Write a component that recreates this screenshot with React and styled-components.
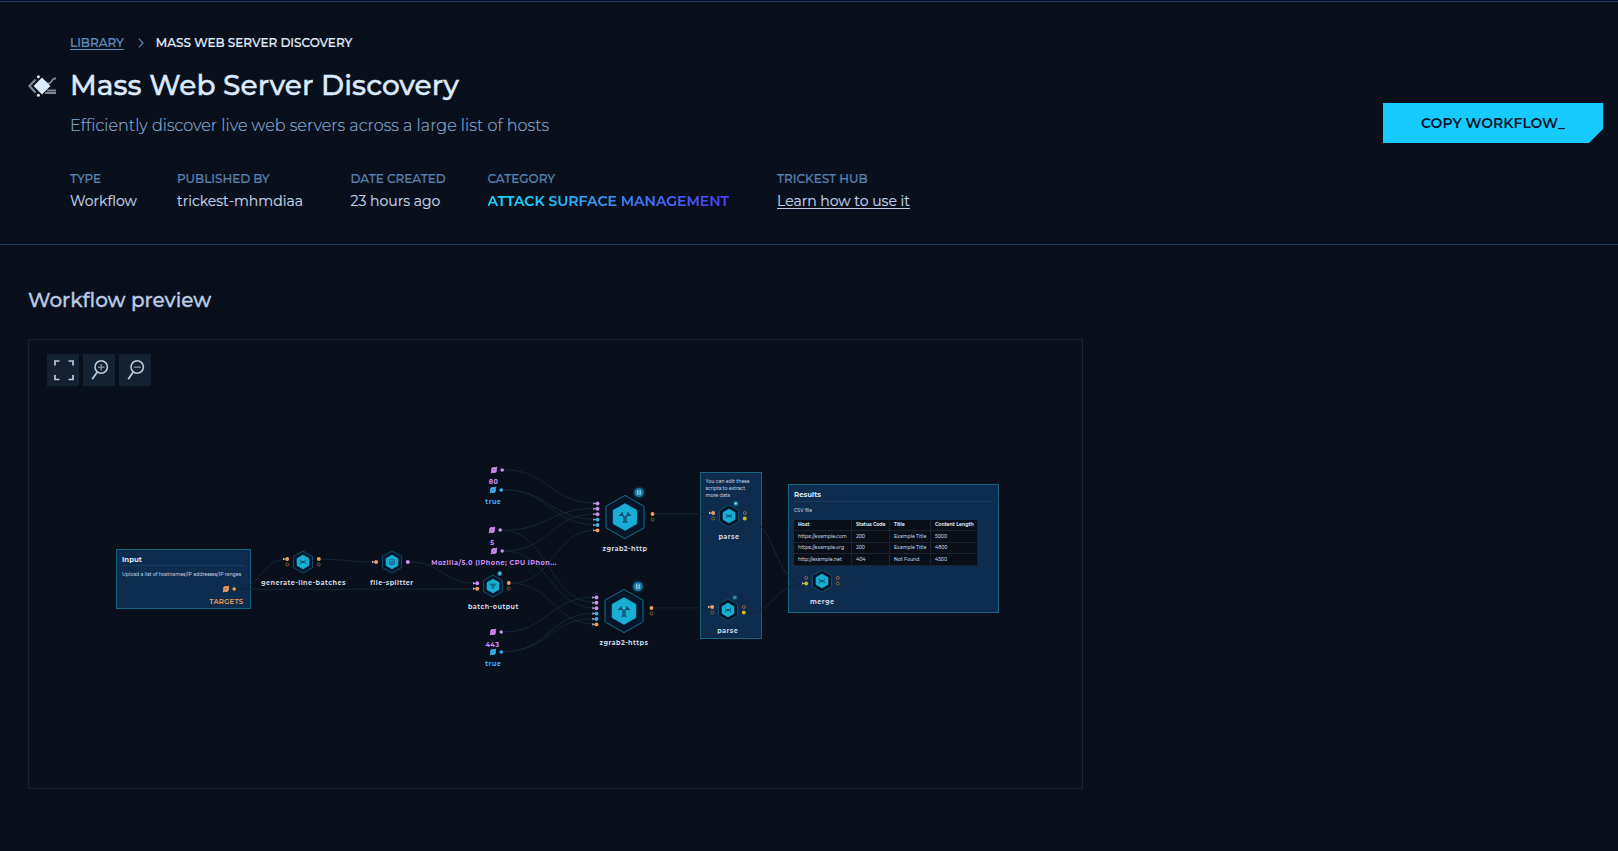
import React from "react";
import styled, { createGlobalStyle } from "styled-components";

const colors = {
  orange: "#f29d5c",
  purple: "#cf8df5",
  blue: "#3fb2f2",
  yellow: "#cdbd1c",
  ring: "#8a7128",
  ringOrange: "#a8744a",
};

const details = [
  { label: "Type", value: "Workflow" },
  { label: "Published by", value: "trickest-mhmdiaa" },
  { label: "Date created", value: "23 hours ago" },
];

// value nodes: glyph position on the board
const values = [
  { x: 464.7, y: 129.7, text: "80", color: "purple" },
  { x: 464.4, y: 149.7, text: "true", color: "blue" },
  { x: 463.4, y: 190.4, text: "5", color: "purple" },
  { x: 465, y: 211, text: "Mozilla/5.0 (iPhone; CPU iPhon...", color: "purple" },
  { x: 463.5, y: 292.3, text: "443", color: "purple" },
  { x: 464.3, y: 311.7, text: "true", color: "blue" },
  { x: 197.3, y: 249.3, text: "TARGETS", color: "orange", light: true },
];

const scriptInputs = [
  { y: -3, color: "orange" },
  { y: 2.5, color: "ring", ring: true },
];

const scanInputs = [
  { y: -13.5, color: "purple" },
  { y: -8.2, color: "purple" },
  { y: -2.8, color: "purple" },
  { y: 2.6, color: "blue" },
  { y: 8, color: "blue" },
  { y: 13.4, color: "orange" },
];

const parseOutputs = [
  { y: -3, color: "ringOrange", ring: true },
  { y: 2.5, color: "yellow" },
];

const nodes = [
  {
    x: 274.4,
    y: 222.3,
    name: "generate-line-batches",
    glyph: "script",
    inputs: scriptInputs,
    outputs: scriptInputs,
  },
  {
    x: 363,
    y: 222,
    name: "file-splitter",
    glyph: "split",
    inputs: [{ y: 0, color: "orange" }],
    outputs: [{ y: 0, color: "purple" }],
  },
  {
    x: 464.4,
    y: 246,
    name: "batch-output",
    glyph: "batch",
    badge: true,
    inputs: [
      { y: -2.7, color: "purple" },
      { y: 2.7, color: "orange" },
    ],
    outputs: scriptInputs,
  },
  {
    x: 596,
    y: 176.5,
    name: "zgrab2-http",
    glyph: "tool",
    large: true,
    inputs: scanInputs,
    outputs: scriptInputs,
  },
  {
    x: 595,
    y: 270.5,
    name: "zgrab2-https",
    glyph: "tool",
    large: true,
    inputs: scanInputs,
    outputs: scriptInputs,
  },
  {
    x: 700,
    y: 176.4,
    name: "parse",
    glyph: "script",
    badge: true,
    panel: true,
    inputs: scriptInputs,
    outputs: parseOutputs,
  },
  {
    x: 698.7,
    y: 270.4,
    name: "parse",
    glyph: "script",
    badge: true,
    panel: true,
    dim: true,
    inputs: scriptInputs,
    outputs: parseOutputs,
  },
  {
    x: 793.3,
    y: 241.3,
    name: "merge",
    glyph: "script",
    panel: true,
    inputs: [
      { y: -3, color: "ringOrange", ring: true },
      { y: 2.5, color: "yellow" },
    ],
    outputs: [
      { y: -3, color: "ringOrange", ring: true },
      { y: 2.5, color: "ring", ring: true },
    ],
  },
];

// [x1, y1, x2, y2]
const wires = [
  [207, 249.3, 257, 219.3],
  [207, 249.3, 447, 249],
  [292, 219.3, 345, 222],
  [380, 222, 447, 243.3],
  [474, 129.7, 567, 163.2],
  [474, 149.7, 567, 179.3],
  [474, 149.7, 567, 184.7],
  [473, 190.3, 567, 168.5],
  [473, 190.3, 566, 262.5],
  [475, 211, 567, 173.9],
  [475, 211, 566, 267.9],
  [482, 243.3, 567, 190.1],
  [482, 243.3, 566, 284.1],
  [473, 292, 566, 257.2],
  [474, 311.7, 566, 273.3],
  [474, 311.7, 566, 278.7],
  [626, 173.9, 682, 173.9],
  [625, 267.8, 681, 267.8],
  [717, 179.3, 775, 244],
  [716, 273.2, 775, 244],
];

const rows = [
  ["https://example.com", "200", "Example Title", "5000"],
  ["https://example.org", "200", "Example Title", "4800"],
  ["http://example.net", "404", "Not Found", "4500"],
];

const hexagon = (w, h) =>
  `0,${-h} ${w},${-h / 2} ${w},${h / 2} 0,${h} ${-w},${h / 2} ${-w},${-h / 2}`;

const WorkflowLogo = () => (
  <svg width="28" height="22" viewBox="0 0 28 22">
    <path d="M7.500 4.500L1.500 11l6 6.500" fill="none" stroke="#7d8797" strokeWidth="2.2" />
    <path
      d="M17 8.500h4c2.500 0 2.500-5 6-5h1M19 15.500h9M17 18h11"
      fill="none"
      stroke="#7d8797"
      strokeWidth="1.8"
    />
    <path d="M14 2.600l8.400 8.400-8.400 8.400L5.600 11z" fill="#dbeafe" />
    <circle cx="10.400" cy="1.800" r="1.500" fill="#dbeafe" />
    <circle cx="10.400" cy="20.200" r="1.500" fill="#dbeafe" />
  </svg>
);

const ZoomIcon = ({ plus }) => (
  <svg width="32" height="32" viewBox="0 0 32 32" fill="none">
    <circle cx="18.200" cy="13" r="6.200" stroke="#b9cbe3" strokeWidth="1.6" />
    <path d="M14.200 18l-5 7.200" stroke="#b9cbe3" strokeWidth="1.7" />
    <path
      d={plus ? "M15 13.200h6.500M18.200 10v6.500" : "M14.800 13.200h7"}
      stroke="#74869b"
      strokeWidth="1.5"
    />
  </svg>
);

const Glyph = ({ type }) => {
  if (type === "tool") {
    return (
      <path
        d="M-2.400 5.300h1.500V-.4L-4.400-3.200M2.400 5.300H.9V-.4l3.500-2.800M-5.900-1.500l2.700-.6M5.900-1.500l-2.700-.6M-2.800-4.800v2.600M2.800-4.800v2.600"
        stroke="#0b3450"
        strokeWidth="1.1"
      />
    );
  }
  if (type === "split") {
    return (
      <g stroke="#0b5a7c" strokeWidth="0.8">
        <circle r="2.900" />
        <path d="M-1.300 1.300v-2h2.600v2z" />
      </g>
    );
  }
  if (type === "batch") {
    return (
      <path
        d="M-3.200-1.800h6.400M-2.600-.3L-1-1.500M2.600-.3L1-1.500M-.7-1.500V2.600M.7-1.500V2.600"
        stroke="#0b4a68"
        strokeWidth="0.8"
      />
    );
  }
  return (
    <path
      d="M-3.200-2.200L-1.400 0l-1.800 2.200M3.200-2.200L1.400 0l1.800 2.200M-1.400-.5h2.800M-1.400.7h2.800"
      stroke="#0b4a68"
      strokeWidth="0.9"
    />
  );
};

const Port = ({ x, port, input }) => (
  <g transform={`translate(${x} ${port.y})`}>
    {port.ring ? (
      <circle r="1.500" stroke={colors[port.color]} strokeWidth="0.8" />
    ) : (
      <>
        {input && (
          <path d="M-3.700-1.100v2.200M-3.300 0h2" stroke="#c3cede" strokeWidth="0.9" />
        )}
        <circle r="1.950" fill={colors[port.color]} />
      </>
    )}
  </g>
);

const NodeDrawing = ({ node }) => {
  const portX = node.large ? 27.5 : 15.8;
  return (
    <NodeSvg width="72" height="72" viewBox="-36 -36 72 72" fill="none">
      <polygon
        points={node.large ? hexagon(19, 21.6) : hexagon(9.6, 11)}
        fill={node.panel ? "#071426" : "#07152b"}
        stroke={node.large ? "#13708c" : "#124e6e"}
        strokeWidth="1"
      />
      <polygon
        points={node.large ? hexagon(11.9, 13.4) : hexagon(6, 7)}
        fill="#19aed4"
        stroke="#19aed4"
        strokeWidth="0.6"
        strokeLinejoin="round"
      />
      <Glyph type={node.glyph} />
      {node.large && (
        <g transform="translate(14 -24.500)">
          <circle r="6.300" fill="#0c3a55" opacity="0.6" />
          <circle r="4.600" fill="#1580aa" />
          <path d="M-1.200-2v4M1.200-2v4" stroke="#c8e6f2" strokeWidth="1.3" strokeDasharray="1.800 0.400" />
        </g>
      )}
      {node.badge && (
        <g transform="translate(6.800 -12.400)" opacity={node.dim ? 0.65 : 1}>
          <circle r="2.500" fill="#17789c" />
          <circle r="1" fill="#b5e4f5" />
        </g>
      )}
      {node.inputs.map((port, index) => (
        <Port key={index} x={-portX} port={port} input />
      ))}
      {node.outputs.map((port, index) => (
        <Port key={index} x={portX} port={port} />
      ))}
    </NodeSvg>
  );
};

const ValueDrawing = ({ color }) => (
  <NodeSvg width="24" height="12" viewBox="-12 -6 24 12" fill="none">
    <circle r="2.900" fill={color} />
    <path d="M-2.900 2.900l1-1M1.900-1.900l1-1" stroke={color} strokeWidth="1.5" />
    <path d="M-1.200.4l1-.8 1.200.6" stroke="#1d2a4a" strokeWidth="0.5" />
    <circle cx="8.200" r="1.800" fill={color} />
  </NodeSvg>
);

const App = () => {
  return (
    <Wrapper>
      <GlobalStyle />
      <Header>
        <HeaderInfo>
          <Breadcrumbs>
            <a>Library</a>
            <svg width="6" height="10" viewBox="0 0 6 10" fill="none">
              <path d="M.7.700L5 5 .7 9.300" stroke="#5b86b5" strokeWidth="1.1" />
            </svg>
            <span>Mass Web Server Discovery</span>
          </Breadcrumbs>
          <Logo>
            <WorkflowLogo />
          </Logo>
          <Title>Mass Web Server Discovery</Title>
          <Subtitle>
            Efficiently discover live web servers across a large list of hosts
          </Subtitle>
          <Details>
            {details.map(({ label, value }) => (
              <div key={label}>
                <DetailLabel>{label}</DetailLabel>
                <DetailValue>{value}</DetailValue>
              </div>
            ))}
            <div>
              <DetailLabel>Category</DetailLabel>
              <CategoryValue>Attack Surface Management</CategoryValue>
            </div>
            <div>
              <DetailLabel>Trickest Hub</DetailLabel>
              <DetailLink as="a">Learn how to use it</DetailLink>
            </div>
          </Details>
        </HeaderInfo>
        <CopyButton type="button">Copy workflow_</CopyButton>
      </Header>
      <Preview>
        <h2>Workflow preview</h2>
        <Board>
          <Toolbar>
            <button type="button">
              <svg width="32" height="32" viewBox="0 0 32 32" fill="none">
                <path
                  d="M8 11.500V7h4.500M21.500 7H26v4.500M26 21v4.500h-4.500M12.500 25.500H8V21"
                  stroke="#b9cbe3"
                  strokeWidth="1.7"
                />
              </svg>
            </button>
            <button type="button">
              <ZoomIcon plus />
            </button>
            <button type="button">
              <ZoomIcon />
            </button>
          </Toolbar>
          <InputPanel>
            <h3>Input</h3>
            <p>Upload a list of hostnames/IP addresses/IP ranges</p>
          </InputPanel>
          <ScriptsPanel>
            You can edit these
            <br />
            scripts to extract
            <br />
            more data
          </ScriptsPanel>
          <ResultsPanel>
            <h3>Results</h3>
            <p>CSV file</p>
            <ResultsTable>
              <thead>
                <tr>
                  <th>Host</th>
                  <th>Status Code</th>
                  <th>Title</th>
                  <th>Content Length</th>
                </tr>
              </thead>
              <tbody>
                {rows.map((row) => (
                  <tr key={row[0]}>
                    {row.map((cell) => (
                      <td key={cell}>{cell}</td>
                    ))}
                  </tr>
                ))}
              </tbody>
            </ResultsTable>
          </ResultsPanel>
          <Wires width="1053" height="448" viewBox="0 0 1053 448">
            {wires.map(([x1, y1, x2, y2], index) => {
              const mid = (x1 + x2) / 2;
              return (
                <path
                  key={index}
                  d={`M${x1} ${y1}C${mid} ${y1} ${mid} ${y2} ${x2} ${y2}`}
                />
              );
            })}
          </Wires>
          {values.map((item, index) => (
            <BoardItem key={index} $x={item.x} $y={item.y}>
              <ValueDrawing color={colors[item.color]} />
              <ValueLabel $color={colors[item.color]} $light={item.light}>
                {item.text}
              </ValueLabel>
            </BoardItem>
          ))}
          {nodes.map((node, index) => (
            <BoardItem key={index} $x={node.x} $y={node.y}>
              <NodeDrawing node={node} />
              <NodeLabel $large={node.large}>{node.name}</NodeLabel>
            </BoardItem>
          ))}
        </Board>
      </Preview>
    </Wrapper>
  );
};

const GlobalStyle = createGlobalStyle`
  * {
    box-sizing: border-box;
  }
  body {
    margin: 0;
    background: #09101c;
    font-family: Montserrat, Inter, sans-serif;
    overflow: hidden;
  }
  h1, h2, h3, p {
    margin: 0;
  }
`;

const Wrapper = styled.main`
  min-height: 851px;
  padding-top: 1px;
  background: #09101c;
`;

const Header = styled.header`
  display: flex;
  align-items: center;
  justify-content: space-between;
  height: 244px;
  padding: 0 15px 0 28px;
  border-top: 1px solid #1d3a68;
  border-bottom: 1px solid #1d3a68;
`;

const HeaderInfo = styled.div`
  display: grid;
  grid-template-columns: 42px 1fr;
  align-self: flex-start;
  padding-top: 33px;
  -webkit-text-stroke: 0.2px;
`;

const Breadcrumbs = styled.nav`
  grid-column: 2;
  display: flex;
  align-items: center;
  font-size: 12px;
  font-weight: 500;
  line-height: 16px;
  text-transform: uppercase;
  color: #e2ecfa;
  a {
    color: #5f8bbd;
    text-decoration: underline;
    text-underline-offset: 2px;
  }
  svg {
    margin: 0 12px 0 14px;
  }
`;

const Logo = styled.div`
  display: flex;
  align-items: center;
  margin-top: 18px;
`;

const Title = styled.h1`
  margin-top: 17px;
  font-size: 28px;
  font-weight: 500;
  line-height: 34px;
  letter-spacing: 0.001em;
  color: #dbeafe;
  -webkit-text-stroke: 0.4px;
`;

const Subtitle = styled.p`
  grid-column: 2;
  margin-top: 14px;
  font-size: 16px;
  font-weight: 300;
  line-height: 20px;
  letter-spacing: 0.0012em;
  color: #84a5cc;
`;

const Details = styled.div`
  grid-column: 2;
  display: grid;
  grid-template-columns: 107px 173.5px 137px 289.5px auto;
  margin-top: 35px;
`;

const DetailLabel = styled.div`
  font-size: 12px;
  font-weight: 500;
  line-height: 16px;
  text-transform: uppercase;
  color: #5980ae;
`;

const DetailValue = styled.div`
  margin-top: 5px;
  font-size: 14px;
  line-height: 18px;
  color: #c0cfe4;
`;

const CategoryValue = styled(DetailValue)`
  width: fit-content;
  font-weight: 600;
  text-transform: uppercase;
  color: transparent;
  background: linear-gradient(90deg, #19d3fb 15%, #3f7bff 60%, #4a3cf5 100%);
  background-clip: text;
`;

const DetailLink = styled(DetailValue)`
  display: block;
  width: fit-content;
  text-decoration: underline;
  text-underline-offset: 2px;
`;

const CopyButton = styled.button`
  width: 220px;
  height: 40px;
  padding: 0;
  border: none;
  background: #18cbff;
  clip-path: polygon(0 0, 100% 0, 100% 26px, 206px 100%, 0 100%);
  font-family: inherit;
  font-size: 14px;
  font-weight: 600;
  text-transform: uppercase;
  color: #07152b;
  cursor: pointer;
`;

const Preview = styled.section`
  padding: 43px 28px 0;
  h2 {
    font-size: 20px;
    font-weight: 500;
    line-height: 24px;
    color: #b9cbe3;
    -webkit-text-stroke: 0.3px;
  }
`;

const Board = styled.div`
  position: relative;
  width: 1055px;
  height: 450px;
  margin-top: 27px;
  padding: 14px 18px;
  border: 1px solid #1a2431;
`;

const Toolbar = styled.div`
  display: flex;
  gap: 4px;
  button {
    width: 32px;
    height: 32px;
    padding: 0;
    border: none;
    background: #132131;
    cursor: pointer;
  }
  svg {
    display: block;
  }
`;

const Panel = styled.div`
  position: absolute;
  padding: 0 5px;
  border: 1px solid #146482;
  background: #0e2c4e;
  font-size: 4.72px;
  font-weight: 500;
  line-height: 7px;
  color: #c6d6e9;
  h3 {
    padding: 6px 0 2px;
    border-bottom: 1px solid #1c3c5c;
    font-size: 7px;
    font-weight: 700;
    line-height: 8px;
    color: #d8e5f5;
  }
  p {
    white-space: nowrap;
  }
`;

const InputPanel = styled(Panel)`
  left: 87px;
  top: 209px;
  width: 135px;
  height: 60px;
  h3 {
    line-height: 7px;
  }
  p {
    margin-top: 5px;
  }
`;

const ScriptsPanel = styled(Panel)`
  left: 671px;
  top: 132px;
  width: 62px;
  height: 167px;
  padding: 5px 4.5px;
  white-space: nowrap;
`;

const ResultsPanel = styled(Panel)`
  left: 759px;
  top: 144px;
  width: 211px;
  height: 129px;
  p {
    margin-top: 5px;
  }
`;

const ResultsTable = styled.table`
  width: 184px;
  margin-top: 5.5px;
  table-layout: fixed;
  border-collapse: separate;
  border-spacing: 0;
  background: #0a0f17;
  th,
  td {
    height: 11.5px;
    padding: 0 0 0 4px;
    border-right: 1px solid #1b232e;
    border-bottom: 1px solid #1b232e;
    font-weight: 500;
    line-height: 7px;
    text-align: left;
    white-space: nowrap;
  }
  th {
    font-weight: 700;
    color: #d8e5f5;
  }
  th:nth-child(1) {
    width: 58px;
  }
  th:nth-child(2) {
    width: 38px;
  }
  th:nth-child(3) {
    width: 41px;
  }
`;

const Wires = styled.svg`
  position: absolute;
  left: 0;
  top: 0;
  fill: none;
  stroke: #152634;
  stroke-width: 1;
`;

const BoardItem = styled.div`
  position: absolute;
  left: ${({ $x }) => $x}px;
  top: ${({ $y }) => $y}px;
  display: flex;
  justify-content: center;
  width: 0;
  height: 0;
`;

const NodeSvg = styled.svg`
  position: absolute;
  transform: translate(-50%, -50%);
  left: 0;
  top: 0;
`;

const NodeLabel = styled.span`
  margin-top: ${({ $large }) => ($large ? 28.5 : 17)}px;
  font-size: 6.5px;
  font-weight: 700;
  line-height: 8px;
  letter-spacing: 0.07em;
  white-space: nowrap;
  color: #ccd5e2;
`;

const ValueLabel = styled.span`
  margin-top: 8.4px;
  font-size: ${({ $light }) => ($light ? 7 : 6.5)}px;
  font-weight: ${({ $light }) => ($light ? 600 : 700)};
  line-height: 8px;
  letter-spacing: ${({ $light }) => ($light ? 0.02 : 0.075)}em;
  white-space: nowrap;
  color: ${({ $color }) => $color};
`;

export default App;
